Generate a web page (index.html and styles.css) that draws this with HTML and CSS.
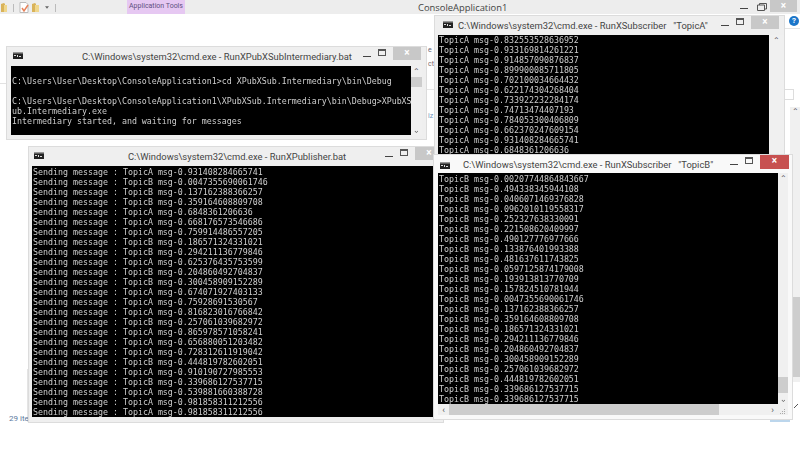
FILE: index.html
```html
<!DOCTYPE html>
<html lang="en">
<head>
<meta charset="utf-8">
<title>ConsoleApplication1</title>
<link rel="stylesheet" href="styles.css">
</head>
<body>
<div class="desktop">
  <header class="appbar">
    <div class="qat">
      <svg class="qat-icon" viewBox="0 0 7 9"><path d="M0 9V1l3-1 1 1v8z" fill="#d9b35a"/><path d="M3 9V2h3v7z" fill="#f0d78c"/></svg>
      <i class="sep"></i>
      <svg class="qat-doc" viewBox="0 0 10 11"><path d="M1 .5h6l2 2v8H1z" fill="#fff" stroke="#bbb"/><path d="M3 6l2 3 4-6" fill="none" stroke="#e8825a" stroke-width="1.500"/></svg>
      <svg class="qat-icon" viewBox="0 0 7 9"><path d="M0 9V1l3-1 1 1v8z" fill="#d9b35a"/><path d="M3 9V2h4v7z" fill="#f0d78c"/></svg>
      <svg class="qat-drop" viewBox="0 0 5 3"><path d="M0 0h5L2.500 3z" fill="#666"/></svg>
      <i class="sep"></i>
    </div>
    <div class="tools">Application Tools</div>
    <div class="apptitle">ConsoleApplication1</div>
    <div class="appctl">
      <i class="min"></i>
      <svg class="restore" viewBox="0 0 10 8"><path d="M.5 2h7v5.500h-7zM2.500 2V.5h7v5.500H8" fill="none" stroke="#555"/></svg>
      <span class="close">×</span>
    </div>
  </header>

  <div class="backdrop-help">?</div>
  <i class="bd-line"></i>
  <i class="bd-box"></i>
  <div class="bd-strip"><span class="bd-up">⌃</span><i class="bd-thumb"></i></div>
  <i class="bd-left"></i>
  <div class="bd-status">29 ite</div>
  <i class="bd-rule"></i>
  <i class="bd-rule-mid"></i>
  <i class="bd-chip"></i>
  <span class="bd-frag bd-frag-1">e</span>
  <span class="bd-frag bd-frag-2">ct</span>
  <span class="bd-frag bd-frag-3">iz</span>
  <svg class="bd-resize" viewBox="0 0 4 4"><path d="M0 4l4-4" stroke="#555"/></svg>

  <section class="win win-inter">
    <div class="title">
      <svg class="cmd" viewBox="0 0 10 7"><rect width="10" height="7" fill="#222"/><rect width="10" height="1.500" fill="#999"/><path d="M1 3h2v1H1zM4 3h1v2H4zM6 4h2v1H6z" fill="#ddd"/></svg>
      <span class="ttext">C:\Windows\system32\cmd.exe - RunXPubXSubIntermediary.bat</span>
      <div class="ctl"><i class="min"></i><i class="max"></i><span class="close">×</span></div>
    </div>
    <div class="body">
      <pre class="console">

C:\Users\User\Desktop\ConsoleApplication1&gt;cd XPubXSub.Intermediary\bin\Debug

C:\Users\User\Desktop\ConsoleApplication1\XPubXSub.Intermediary\bin\Debug&gt;XPubXS
ub.Intermediary.exe
Intermediary started, and waiting for messages</pre>
      <div class="vbar"><span class="arrow">⌃</span><i class="thumb"></i><span class="arrow down">⌃</span></div>
    </div>
  </section>

  <section class="win win-pub">
    <div class="title">
      <svg class="cmd" viewBox="0 0 10 7"><rect width="10" height="7" fill="#222"/><rect width="10" height="1.500" fill="#999"/><path d="M1 3h2v1H1zM4 3h1v2H4zM6 4h2v1H6z" fill="#ddd"/></svg>
      <span class="ttext">C:\Windows\system32\cmd.exe - RunXPublisher.bat</span>
      <div class="ctl"><i class="min"></i><i class="max"></i><span class="close">×</span></div>
    </div>
    <div class="body">
      <pre class="console">Sending message : TopicA msg-0.931408284665741
Sending message : TopicB msg-0.0047355690061746
Sending message : TopicB msg-0.137162388366257
Sending message : TopicB msg-0.359164608809708
Sending message : TopicA msg-0.6848361206636
Sending message : TopicA msg-0.668176573546686
Sending message : TopicA msg-0.759914486557205
Sending message : TopicB msg-0.186571324331021
Sending message : TopicB msg-0.294211136779846
Sending message : TopicA msg-0.625376435753599
Sending message : TopicB msg-0.204860492704837
Sending message : TopicB msg-0.300458909152289
Sending message : TopicA msg-0.674071927403133
Sending message : TopicA msg-0.75928691530567
Sending message : TopicA msg-0.816823016766842
Sending message : TopicB msg-0.257061039682972
Sending message : TopicA msg-0.865978571058241
Sending message : TopicA msg-0.656880051203482
Sending message : TopicA msg-0.728312611919042
Sending message : TopicB msg-0.444819782602051
Sending message : TopicA msg-0.910190727985553
Sending message : TopicB msg-0.339686127537715
Sending message : TopicA msg-0.539881660388728
Sending message : TopicA msg-0.981858311212556
Sending message : TopicA msg-0.981858311212556</pre>
    </div>
  </section>

  <section class="win win-a">
    <div class="title">
      <svg class="cmd" viewBox="0 0 10 7"><rect width="10" height="7" fill="#222"/><rect width="10" height="1.500" fill="#999"/><path d="M1 3h2v1H1zM4 3h1v2H4zM6 4h2v1H6z" fill="#ddd"/></svg>
      <span class="ttext">C:\Windows\system32\cmd.exe - RunXSubscriber   "TopicA"</span>
      <div class="ctl"><i class="min"></i><i class="max"></i><span class="close">×</span></div>
    </div>
    <div class="body">
      <pre class="console">TopicA msg-0.832553528636952
TopicA msg-0.933169814261221
TopicA msg-0.914857090876837
TopicA msg-0.899900085711805
TopicA msg-0.702100034664432
TopicA msg-0.622174304268404
TopicA msg-0.733922232284174
TopicA msg-0.74713474407193
TopicA msg-0.784053300406809
TopicA msg-0.662370247609154
TopicA msg-0.931408284665741
TopicA msg-0.6848361206636</pre>
      <div class="vbar"><span class="arrow">⌃</span></div>
    </div>
  </section>

  <section class="win win-b">
    <div class="title">
      <svg class="cmd" viewBox="0 0 10 7"><rect width="10" height="7" fill="#222"/><rect width="10" height="1.500" fill="#999"/><path d="M1 3h2v1H1zM4 3h1v2H4zM6 4h2v1H6z" fill="#ddd"/></svg>
      <span class="ttext">C:\Windows\system32\cmd.exe - RunXSubscriber   "TopicB"</span>
      <div class="ctl"><i class="min"></i><i class="max"></i><span class="close">×</span></div>
    </div>
    <div class="body">
      <pre class="console">TopicB msg-0.00207744864843667
TopicB msg-0.494338345944108
TopicB msg-0.0406071469376828
TopicB msg-0.0962010119558317
TopicB msg-0.252327638330091
TopicB msg-0.221508620409997
TopicB msg-0.490127776977666
TopicB msg-0.133876401993388
TopicB msg-0.481637611743825
TopicB msg-0.0597125874179008
TopicB msg-0.193913813770709
TopicB msg-0.157824510781944
TopicB msg-0.0047355690061746
TopicB msg-0.137162388366257
TopicB msg-0.359164608809708
TopicB msg-0.186571324331021
TopicB msg-0.294211136779846
TopicB msg-0.204860492704837
TopicB msg-0.300458909152289
TopicB msg-0.257061039682972
TopicB msg-0.444819782602051
TopicB msg-0.339686127537715
TopicB msg-0.339686127537715</pre>
      <div class="vbar"><span class="arrow">⌃</span><i class="thumb"></i><span class="arrow down">⌃</span></div>
    </div>
    <div class="hbar">
      <span class="harrow">‹</span>
      <div class="htrack"><i class="hthumb"></i></div>
      <span class="harrow">›</span>
      <svg class="grip" viewBox="0 0 6 6"><path d="M4 0h1v1H4zM2 2h1v1H2zM4 2h1v1H4zM0 4h1v1H0zM2 4h1v1H2zM4 4h1v1H4z" fill="#aaa"/></svg>
    </div>
  </section>
</div>
</body>
</html>
```
FILE: styles.css
```css
* { box-sizing: border-box; }
html, body { margin: 0; padding: 0; background: #fff; }
i { display: block; }

.desktop {
  position: relative;
  width: 800px;
  height: 450px;
  overflow: hidden;
  background: #fff;
  font-family: Roboto, "Liberation Sans", sans-serif;
}

/* background application */
.appbar {
  display: flex;
  align-items: flex-start;
  height: 14px;
  background: #ededed;
}
.qat { display: flex; align-items: center; width: 127px; height: 14px; padding: 1px 0 0 1px; }
.qat-icon { width: 7px; height: 9px; flex: none; }
.qat-doc { width: 10px; height: 11px; margin: 0 3px 0 5px; flex: none; }
.qat-drop { width: 4px; height: 3px; margin: 0 6px; flex: none; }
.sep { width: 1px; height: 8px; background: #bbb; flex: none; }
.qat > .qat-icon:first-child + .sep { margin-left: 5px; }
.tools {
  width: 58px;
  height: 14px;
  background: #e6c8f2;
  color: #5f5080;
  font-size: 7px;
  line-height: 13px;
  text-align: center;
}
.apptitle {
  margin-left: 233px;
  width: 300px;
  color: #444;
  font-family: "Open Sans", sans-serif;
  font-size: 9.4px;
  line-height: 15px;
}
.appctl { display: flex; margin-left: auto; align-items: flex-start; }
.appctl .min { width: 8px; height: 1px; margin: 8px 9px 0 0; }
.min { background: #444; }
.restore { width: 10px; height: 8px; margin: 3px 3px 0 0; }
.appctl .close { width: 27px; height: 12px; margin-right: 3px; line-height: 12px; }

.close {
  display: block;
  background: #c8c8c8;
  color: #fff;
  font-size: 10px;
  font-weight: 700;
  line-height: 12px;
  text-align: center;
}

.backdrop-help {
  position: absolute;
  left: 789px;
  top: 16px;
  width: 10px;
  height: 10px;
  border-radius: 50%;
  background: #1a75c9;
  color: #fff;
  font-size: 8px;
  font-weight: 700;
  line-height: 10px;
  text-align: center;
}
.bd-line { position: absolute; left: 785px; top: 28px; width: 15px; height: 1px; background: #e4e4e4; }
.bd-box { position: absolute; left: 782px; top: 89px; width: 12px; height: 11px; background: #fff; border: 1px solid #ddd; }
.bd-strip {
  position: absolute;
  left: 790px;
  top: 107px;
  width: 10px;
  height: 275px;
  background: #f0f0f0;
  text-align: center;
}
.bd-up { display: block; color: #555; font-size: 8px; line-height: 10px; }
.bd-thumb { position: absolute; left: 3px; top: 190px; width: 7px; height: 80px; background: #cdcdcd; }
.bd-left { position: absolute; left: 27px; top: 369px; width: 2px; height: 53px; background: #e4e4e4; }
.bd-status { position: absolute; left: 9px; top: 413px; color: #5b7a9e; font-size: 8px; line-height: 12px; }
.bd-rule { position: absolute; left: 0; top: 83px; width: 6px; height: 1px; background: #e2e2e2; }
.bd-rule-mid { position: absolute; left: 427px; top: 89px; width: 7px; height: 1px; background: #e6e6e6; }
.bd-chip { position: absolute; left: 770px; top: 420px; width: 20px; height: 2px; background: #bcd6ec; }
.bd-frag { position: absolute; left: 428px; font-size: 7px; line-height: 8px; }
.bd-frag-1 { top: 46px; color: #667; }
.bd-frag-2 { top: 60px; color: #7a6a70; }
.bd-frag-3 { top: 112px; color: #6f93bb; }
.bd-resize { position: absolute; left: 794px; top: 404px; width: 4px; height: 4px; }

/* console windows */
.win {
  position: absolute;
  display: flex;
  flex-direction: column;
  background: #efefef;
  border: 1px solid #dcdcdc;
}
.win-inter { left: 6px; top: 46px; width: 421px; height: 94px; padding: 0 4px 4px; }
.win-pub { left: 28px; top: 146px; width: 416px; height: 277px; padding: 0 0 5px 3px; }
.win-a { left: 434px; top: 15px; width: 351px; height: 170px; padding: 0 0 0 3px; }
.win-b { left: 433px; top: 154px; width: 360px; height: 266px; padding: 0 4px 4px 4px; background: #f9f9f9; }

.title {
  display: flex;
  align-items: flex-start;
  flex: none;
  height: 19px;
  color: #444;
  font-size: 9.4px;
  line-height: 20px;
  white-space: pre;
}
.win-b .title { height: 18px; }
.cmd { width: 10px; height: 7px; margin: 5px 0 0 2px; flex: none; }
.win-a .cmd { margin-left: 5px; }
.win-b .cmd { margin: 7px 0 0 2px; }
.win-b .ttext { line-height: 19px; }
.ttext { flex: none; }
.win-inter .ttext { margin-left: 59px; }
.win-pub .ttext { margin-left: 84px; }
.win-a .ttext { margin-left: 5px; }
.win-b .ttext { margin-left: 13px; }

.ctl { display: flex; align-items: flex-start; margin-left: auto; }
.ctl .min { width: 8px; height: 1px; margin: 9px 7px 0 0; }
.max { width: 8px; height: 7px; margin: 2px 7px 0 0; border: 1px solid #555; border-top-width: 2px; }
.ctl .close { width: 28px; height: 13px; }
.win-inter .ctl { margin-right: 1px; }
.win-a .ctl { margin-right: 5px; }
.win-b .close { background: #c75050; }
.win-b .ctl .close { width: 29px; height: 14px; margin-right: -1px; }

.body { display: flex; flex: 1; min-height: 0; }

.console {
  flex: 1;
  min-width: 0;
  margin: 0;
  padding: 0 0 0 1px;
  overflow: hidden;
  background: #000;
  color: #cecece;
  font-family: "DejaVu Sans Mono", "Liberation Mono", monospace;
  font-size: 8.3px;
  line-height: 10px;
  white-space: pre;
  filter: blur(0.25px);
}
.win-b .console { padding-top: 1px; }
.win-pub .console { padding-top: 1px; }

.vbar {
  position: relative;
  display: flex;
  flex-direction: column;
  align-items: center;
  flex: none;
  width: 11px;
  background: #f0f0f0;
}
.win-a .vbar { width: 15px; }
.win-b .vbar { width: 10px; }
.arrow { display: block; color: #555; font-size: 8px; line-height: 11px; height: 11px; }
.arrow.down { margin-top: auto; transform: scaleY(-1); }
.thumb { width: 100%; height: 10px; background: #cdcdcd; }
.win-b .thumb { height: 16px; margin-top: auto; }
.win-b .arrow.down { margin-top: 0; }

.hbar {
  display: flex;
  align-items: center;
  flex: none;
  height: 11px;
  background: #f0f0f0;
  color: #555;
  font-size: 9px;
  line-height: 10px;
}
.harrow { width: 11px; height: 10px; text-align: center; flex: none; }
.htrack { flex: 1; height: 11px; }
.hthumb { width: 270px; height: 11px; background: #cdcdcd; }
.grip { width: 6px; height: 6px; margin: 4px 2px 0 2px; flex: none; }
```
